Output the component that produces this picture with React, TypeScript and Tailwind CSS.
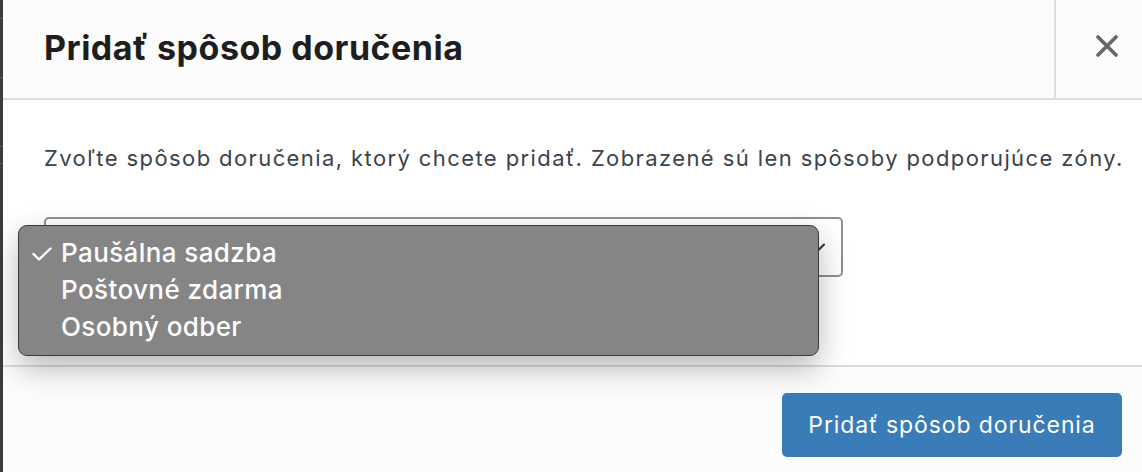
import { ChevronDown } from 'lucide-react';

const options = ['Paušálna sadzba', 'Poštovné zdarma', 'Osobný odber'];

export default function App() {
  return (
    <div className="relative flex w-[1142px] h-[472px] overflow-hidden bg-white font-['Inter',sans-serif]">
      {/* backdrop strip */}
      <div className="flex w-[3px] shrink-0 flex-col bg-[#3c3c3c]">
        <div className="mt-[18px] h-px bg-[#5a5a5a]" />
        <div className="mt-[58px] h-px bg-[#5a5a5a]" />
        <div className="mt-[68px] h-px bg-[#5a5a5a]" />
        <div className="mt-[16px] h-px bg-[#5a5a5a]" />
      </div>

      <div className="flex flex-1 flex-col">
        <div className="flex h-[100px] shrink-0 border-b-2 border-[#dcdcdc] bg-[#fcfcfc]">
          <div className="flex flex-1 items-center pl-[41px] pb-[4px]">
            <h1 className="text-[34px] font-bold tracking-[0.5px] text-[#1e1e1e]">Pridať spôsob doručenia</h1>
          </div>
          <div className="flex w-[88px] items-center border-l-2 border-[#dcdcdc] pb-[6px] pl-[40px]">
            <svg width="22" height="22" viewBox="0 0 22 22" fill="none">
              <path d="M2 2L20 20M20 2L2 20" stroke="#666" strokeWidth="3.6" strokeLinecap="round" />
            </svg>
          </div>
        </div>

        <div className="flex h-[265px] shrink-0 flex-col pl-[41px] pt-[43px]">
          <p className="text-[22px] leading-[30px] tracking-[1.4px] text-[#3c434a]">
            Zvoľte spôsob doručenia, ktorý chcete pridať. Zobrazené sú len spôsoby podporujúce zóny.
          </p>
          <div className="mt-[44px] flex h-[60px] w-[799px] items-center justify-end rounded-[5px] border-2 border-[#8c8f94] bg-white pr-[12px]">
            <ChevronDown className="h-5 w-5 text-[#333]" strokeWidth={2.5} />
          </div>
        </div>

        <div className="flex flex-1 items-start justify-end border-t-2 border-[#dcdcdc] bg-[#fcfcfc] pr-[20px] pt-[26px]">
          <button className="h-[64px] w-[340px] rounded-[5px] bg-[#3a7cb8] text-[23px] tracking-[0.9px] text-white">
            Pridať spôsob doručenia
          </button>
        </div>
      </div>

      {/* native select popup */}
      <div className="absolute left-[18px] top-[225px] h-[131px] w-[801px] rounded-[9px] border border-[#3a3a3a] bg-[#858585] py-[8px] shadow-[0_12px_30px_rgba(0,0,0,0.28)]">
        {options.map((o, i) => (
          <div key={o} className="flex h-[37px] items-center text-[26px] font-medium tracking-[0.4px] text-white">
            <span className="flex w-[42px] items-center pl-[13px] pt-[2px]">
              {i === 0 && (
                <svg width="20" height="14" viewBox="0 0 20 14" fill="none">
                  <path d="M1.5 7L7 12.5L18.5 1.5" stroke="white" strokeWidth="2.4" strokeLinecap="round" strokeLinejoin="round" />
                </svg>
              )}
            </span>
            <span>{o}</span>
          </div>
        ))}
      </div>
    </div>
  );
}
